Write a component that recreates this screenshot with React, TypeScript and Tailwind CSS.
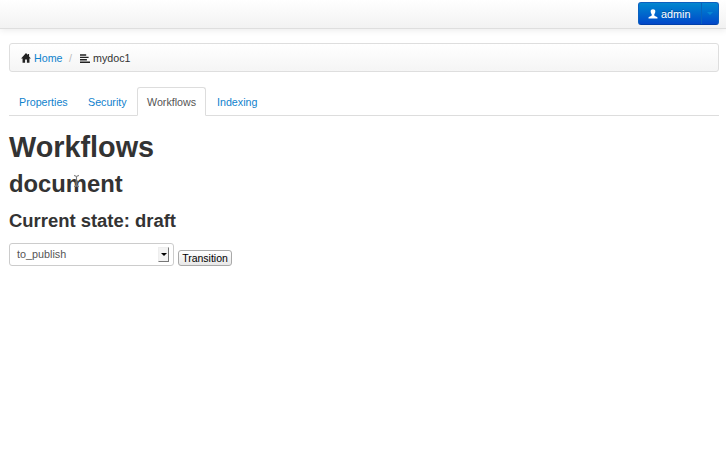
const HomeIcon = () => (
  <svg width="10" height="10" viewBox="0 0 11 10" preserveAspectRatio="none" className="shrink-0" fill="#222">
    <path d="M5.5 0 L7.5 2 V0.9 H8.9 V3.4 L10.9 5.5 H9.3 V9.8 H6.5 V6.4 H4.5 V9.8 H1.7 V5.5 H0.1 Z" />
  </svg>
);

const AlignLeftIcon = () => (
  <svg width="10" height="9" viewBox="0 0 10 9" className="shrink-0" fill="#222">
    <path d="M0 0.3 H6.2 V1.7 H0 Z M0 2.7 H8.6 V4.1 H0 Z M0 5.1 H6.9 V6.5 H0 Z M0 7.5 H10 V8.9 H0 Z" />
  </svg>
);

const UserIcon = () => (
  <svg width="10" height="10" viewBox="0 0 10 10" className="mb-[2px] shrink-0" fill="white">
    <path d="M5 0.2 C6.8 0.2 7.5 1.3 7.3 2.8 C7.2 4.1 6.7 4.7 6.3 5.3 V6.5 C6.7 7.3 9.3 7.5 9.5 8.5 V9.5 H0.5 V8.5 C0.7 7.5 3.3 7.3 3.7 6.5 V5.3 C3.3 4.7 2.8 4.1 2.7 2.8 C2.5 1.3 3.2 0.2 5 0.2 Z" />
  </svg>
);

const TextCursor = () => (
  <svg width="7" height="14" viewBox="0 0 7 14" className="absolute left-[64px] top-[5px]" fill="none">
    <path d="M1 1.5 Q3 1.5 3.5 3 Q4 1.5 6 1.5 M3.5 3 V11 M1 12.5 Q3 12.5 3.5 11 Q4 12.5 6 12.5" stroke="#ccc" strokeOpacity="0.6" strokeWidth="1.6" />
    <path d="M1 1.5 Q3 1.5 3.5 3 Q4 1.5 6 1.5 M3.5 3 V11 M1 12.5 Q3 12.5 3.5 11 Q4 12.5 6 12.5 M2 9 H5" stroke="#666" strokeWidth="0.8" />
  </svg>
);

export default function App() {
  return (
    <div className="h-[471px] w-full overflow-hidden bg-white font-['Liberation_Sans',Arial,sans-serif] text-[10.7px] leading-[15px] text-[#333]">
      <header className="flex h-[29px] justify-end border-b border-[#dedede] bg-linear-to-b from-white to-[#f2f2f2] pr-[7px] pt-[2px] shadow-[0_1px_7px_rgba(0,0,0,0.09)]">
        <div className="flex h-[23px] overflow-hidden rounded-[3px] border border-[#0b60c0] border-b-[#003fa8] bg-linear-to-b from-[#0787cf] to-[#0446c9] text-white">
          <button className="flex w-[63px] items-center gap-[3px] border-r border-[#0864bb] pl-[9px] pt-[2px] [text-shadow:0_-1px_0_rgba(0,0,0,0.25)]">
            <UserIcon />
            <span className="text-[10.8px]">admin</span>
          </button>
          <button aria-label="Account menu" className="flex w-[16px] items-center justify-center">
            <span className="border-x-[3px] border-t-[3px] border-x-transparent border-t-[#0787d3]" />
          </button>
        </div>
      </header>

      <main className="pl-[9px] pr-[7px] pt-[14px]">
        <nav className="flex h-[29px] items-center rounded-[3px] border border-[#dedede] bg-linear-to-b from-white to-[#f5f5f5] pl-[11px] pt-px">
          <HomeIcon />
          <a className="ml-[3px] w-[29px] whitespace-nowrap text-[#0f82cd]">Home</a>
          <span className="ml-[6px] w-[3px] text-[#bbb]">/</span>
          <span className="ml-[8px] flex items-center gap-[3px]"><AlignLeftIcon />mydoc1</span>
        </nav>

        <ul className="mt-[15px] flex h-[29px] border-b border-[#ddd] text-[#0f82cd]">
          <li className="mr-[2px] w-[67px] pl-[10px] pt-[8px]">Properties</li>
          <li className="mr-[1px] w-[58px] pl-[10px] pt-[8px]">Security</li>
          <li className="mr-[1px] h-[29px] w-[69px] rounded-t-[3px] border border-b-white border-[#ddd] bg-white pl-[9px] pt-[7px] text-[#555]">Workflows</li>
          <li className="pl-[10px] pt-[8px]">Indexing</li>
        </ul>

        <h1 className="mt-[15px] h-[38px] text-[28.8px] font-bold leading-[32px]">Workflows</h1>
        <h2 className="relative h-[37px] text-[23.8px] font-bold leading-[30px]">document<TextCursor /></h2>
        <h3 className="h-[37px] text-[18.45px] font-bold leading-[29px]">Current state: draft</h3>

        <div className="flex">
          <div className="flex h-[23px] w-[165px] items-center justify-between rounded-[3px] border border-[#ccc] pl-[7px] pr-[4px] text-[#555]">
            <span className="text-[10.8px]">to_publish</span>
            <span className="flex h-[15px] w-[11px] items-center justify-center border border-[#eee] border-b-[#777] border-r-[#777] bg-[#f3f3f3]">
              <span className="border-x-[3px] border-t-[3px] border-x-transparent border-t-black" />
            </span>
          </div>
          <button className="ml-[4px] mt-[7px] flex h-[16px] w-[54px] items-center justify-center rounded-[3px] border border-[#a9a9a9] bg-linear-to-b from-white to-[#e8e8e8] text-[10.5px] text-black">Transition</button>
        </div>
      </main>
    </div>
  );
}
